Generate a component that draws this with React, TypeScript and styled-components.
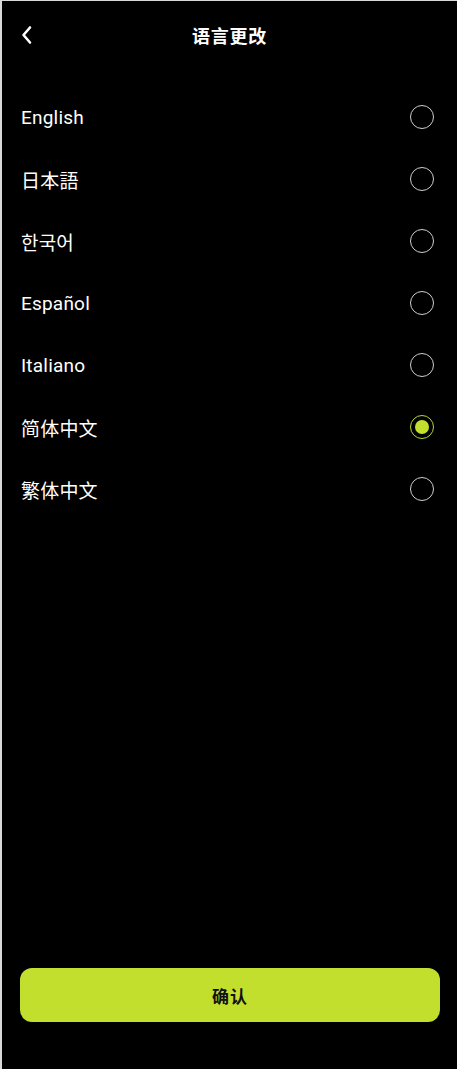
import React, { useState } from 'react'
import styled, { createGlobalStyle } from 'styled-components'

const GlobalStyle = createGlobalStyle`
html, body {
  margin: 0;
  padding: 0;
  background: #000;
}
* { box-sizing: border-box; }
`

const Screen = styled.div`
width: 457px;
height: 1069px;
display: flex;
flex-flow: column;
background: #000;
border-left: 2px solid #d9d9d9;
border-top: 1px solid #d9d9d9;
font-family: Roboto, "Noto Sans CJK SC", "Noto Sans CJK JP", "Noto Sans CJK KR", sans-serif;
color: #fff;
`

const Header = styled.header`
position: relative;
height: 68px;
display: flex;
align-items: center;
justify-content: center;
flex-shrink: 0;
`

const BackButton = styled.button`
position: absolute;
left: 13px;
top: 21px;
width: 24px;
height: 26px;
padding: 0;
border: none;
background: none;
display: flex;
align-items: center;
justify-content: center;
cursor: pointer;
`

const Title = styled.h1`
margin: 0;
font-size: 18px;
font-weight: 600;
letter-spacing: .8px;
`

const List = styled.ul`
list-style: none;
margin: 0;
padding: 17px 0 0;
`

const Row = styled.li`
height: 62px;
padding: 0 23px 0 19px;
display: flex;
align-items: center;
justify-content: space-between;
cursor: pointer;
`

const Label = styled.span`
font-size: 19px;
letter-spacing: .2px;
`

const Radio = styled.span<{ checked: boolean }>`
width: 24px;
height: 24px;
border-radius: 50%;
border: 1px solid ${({ checked }) => (checked ? '#b9d62c' : '#cfcfcf')};
display: flex;
align-items: center;
justify-content: center;

&::after {
  content: '';
  width: 14px;
  height: 14px;
  border-radius: 50%;
  background: #c3df2e;
  display: ${({ checked }) => (checked ? 'block' : 'none')};
}
`

const Footer = styled.div`
margin-top: auto;
padding: 0 17px 47px 18px;
`

const ConfirmButton = styled.button`
width: 100%;
height: 54px;
border: none;
border-radius: 12px;
background: #c3df2e;
color: #111;
font-family: inherit;
font-size: 17px;
font-weight: 700;
letter-spacing: 1px;
cursor: pointer;
`

const languages = ['English', '日本語', '한국어', 'Español', 'Italiano', '简体中文', '繁体中文']

const App = () => {
  const [selected, setSelected] = useState('简体中文')

  return (
    <>
      <GlobalStyle />
      <Screen>
        <Header>
          <BackButton aria-label="back">
            <svg width="14" height="20" viewBox="0 0 14 20" fill="none">
              <path d="M10 2.5 L3.5 10 L10 17.5" stroke="#fff" strokeWidth="2.6" strokeLinecap="round" strokeLinejoin="round" />
            </svg>
          </BackButton>
          <Title>语言更改</Title>
        </Header>
        <List>
          {languages.map(lang => (
            <Row key={lang} onClick={() => setSelected(lang)}>
              <Label lang={lang === '日本語' ? 'ja' : lang === '한국어' ? 'ko' : undefined}>{lang}</Label>
              <Radio checked={selected === lang} />
            </Row>
          ))}
        </List>
        <Footer>
          <ConfirmButton>确认</ConfirmButton>
        </Footer>
      </Screen>
    </>
  )
}

export default App
